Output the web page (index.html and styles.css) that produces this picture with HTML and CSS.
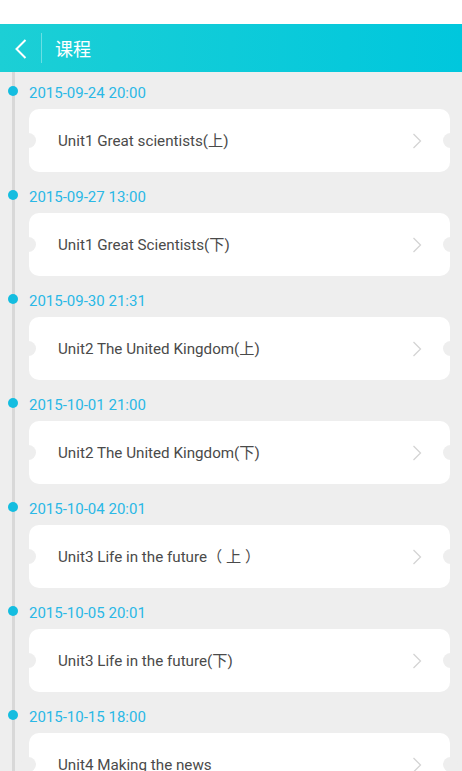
FILE: index.html
```html
<!DOCTYPE html>
<html>
    <head>
        <meta name="viewport" content="width=device-width, initial-scale=1.0">
        <title>课程</title>
        <link rel="stylesheet" href="styles.css">
    </head>
    <body>
        <div class="status-bar"></div>
        <div class="top-bar">
            <div class="back">
                <svg width="12" height="20" viewBox="0 0 12 20">
                    <polyline points="10.5,1 1.5,10 10.5,19" fill="none" stroke="#fff" stroke-width="2"/>
                </svg>
            </div>
            <div class="divider"></div>
            <h1>课程</h1>
        </div>

        <div class="timeline">
            <div class="item">
                <div class="date">2015-09-24 20:00</div>
                <div class="card"><span>Unit1 Great scientists(上)</span><svg class="arrow" viewBox="0 0 10 16"><polyline points="1.5,1 8.5,8 1.5,15"/></svg></div>
            </div>
            <div class="item">
                <div class="date">2015-09-27 13:00</div>
                <div class="card"><span>Unit1 Great Scientists(下)</span><svg class="arrow" viewBox="0 0 10 16"><polyline points="1.5,1 8.5,8 1.5,15"/></svg></div>
            </div>
            <div class="item">
                <div class="date">2015-09-30 21:31</div>
                <div class="card"><span>Unit2 The United Kingdom(上)</span><svg class="arrow" viewBox="0 0 10 16"><polyline points="1.5,1 8.5,8 1.5,15"/></svg></div>
            </div>
            <div class="item">
                <div class="date">2015-10-01 21:00</div>
                <div class="card"><span>Unit2 The United Kingdom(下)</span><svg class="arrow" viewBox="0 0 10 16"><polyline points="1.5,1 8.5,8 1.5,15"/></svg></div>
            </div>
            <div class="item">
                <div class="date">2015-10-04 20:01</div>
                <div class="card"><span>Unit3 Life in the future（ 上 ）</span><svg class="arrow" viewBox="0 0 10 16"><polyline points="1.5,1 8.5,8 1.5,15"/></svg></div>
            </div>
            <div class="item">
                <div class="date">2015-10-05 20:01</div>
                <div class="card"><span>Unit3 Life in the future(下)</span><svg class="arrow" viewBox="0 0 10 16"><polyline points="1.5,1 8.5,8 1.5,15"/></svg></div>
            </div>
            <div class="item">
                <div class="date">2015-10-15 18:00</div>
                <div class="card"><span>Unit4 Making the news</span><svg class="arrow" viewBox="0 0 10 16"><polyline points="1.5,1 8.5,8 1.5,15"/></svg></div>
            </div>
        </div>
    </body>
</html>
```

FILE: styles.css
```css
html, body {
    margin: 0;
    height: 100%;
    overflow: hidden;
}
body {
    background: #eeeeee;
    font-family: Roboto, "Noto Sans CJK SC", sans-serif;
}
.status-bar {
    height: 24px;
    background: #ffffff;
}
.top-bar {
    height: 48px;
    display: flex;
    align-items: center;
    background: linear-gradient(to right, #1ccfd5, #00c7dd);
}
.back {
    width: 41px;
    display: flex;
    justify-content: center;
    padding-left: 1px;
    box-sizing: border-box;
    padding-top: 2px;
}
.divider {
    width: 1px;
    height: 30px;
    background: rgba(255, 255, 255, 0.35);
}
h1 {
    margin: 0 0 0 13px;
    font-family: "Noto Sans CJK SC", sans-serif;
    font-weight: normal;
    font-size: 18px;
    color: #ffffff;
}
.timeline {
    margin-left: 12px;
    border-left: 3px solid #d8d8d8;
    padding-top: 11px;
    height: 100%;
}
.item {
    position: relative;
    padding-bottom: 15px;
}
.item::before {
    content: "";
    position: absolute;
    left: -7px;
    top: 3px;
    width: 10px;
    height: 10px;
    border-radius: 50%;
    background: #14bde0;
}
.date {
    height: 20px;
    line-height: 20px;
    padding-left: 14px;
    font-size: 15px;
    color: #2ab8e6;
}
.card {
    position: relative;
    box-sizing: border-box;
    margin: 6px 12px 0 14px;
    height: 63px;
    border-radius: 10px;
    background: #ffffff;
    display: flex;
    align-items: center;
    justify-content: space-between;
    padding: 0 28px 0 29px;
    font-size: 15.2px;
    color: #4a4a4a;
}
.card span {
    line-height: 20px;
}
.card::before, .card::after {
    content: "";
    position: absolute;
    top: 24px;
    width: 15px;
    height: 15px;
    border-radius: 50%;
    background: #eeeeee;
}
.card::before {
    left: -8px;
}
.card::after {
    right: -8px;
}
.arrow {
    width: 10px;
    height: 16px;
    fill: none;
    stroke: #d4d4d4;
    stroke-width: 1.3;
}
```
